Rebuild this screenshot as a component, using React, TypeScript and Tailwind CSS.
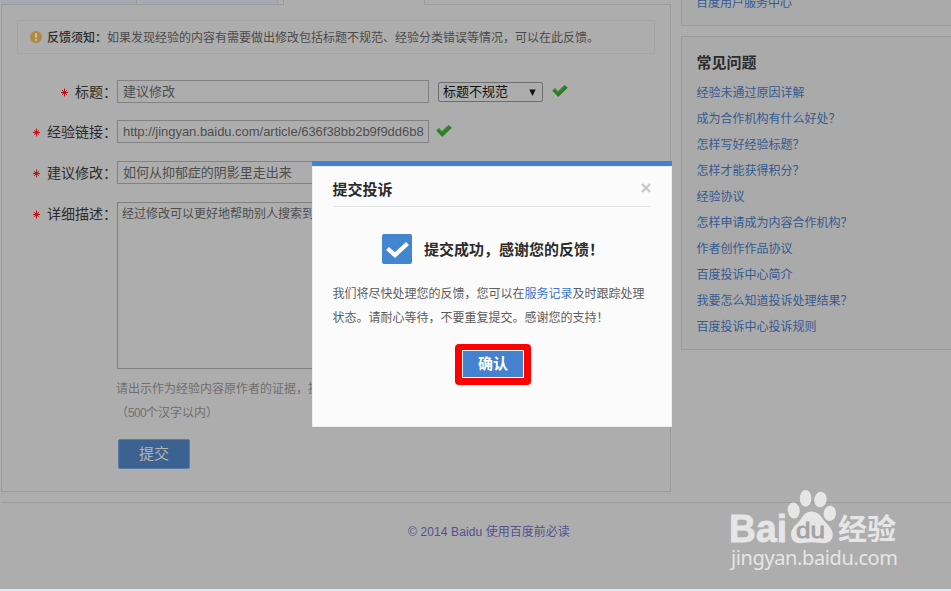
import type { ReactNode } from "react";
import clsx from "clsx";

const FAQ_LINKS = [
  "经验未通过原因详解",
  "成为合作机构有什么好处？",
  "怎样写好经验标题？",
  "怎样才能获得积分？",
  "经验协议",
  "怎样申请成为内容合作机构？",
  "作者创作作品协议",
  "百度投诉中心简介",
  "我要怎么知道投诉处理结果？",
  "百度投诉中心投诉规则",
];

function GreenTick() {
  return (
    <svg width="16" height="12" viewBox="0 0 16 12">
      <path d="M0.2 5.600 3 3 5.900 6 12.600 0 15.800 2.800 6.200 12Z" fill="#2b7d26" />
      <path d="M1.300 5.600 3 4.100 5.900 7.100 12.600 1.200" fill="none" stroke="#449a38" />
    </svg>
  );
}

function Field({
  label,
  className,
  children,
}: {
  label: string;
  className?: string;
  children: ReactNode;
}) {
  return (
    <div className={clsx("flex items-start", className)}>
      <div className="flex w-[115px] shrink-0 justify-end text-[14px] leading-[24px] text-[#2b2b2b]">
        <svg width="7" height="9" viewBox="0 0 7 9" className="mt-[8px] mr-[7px]">
          <path d="M3.500 0.500v8M0 4.500h7M1 2.200l5 4.600M6 2.200l-5 4.600" stroke="#b8141a" strokeWidth="1" />
        </svg>
        <span>{label}：</span>
      </div>
      {children}
    </div>
  );
}

function TextInput({ value }: { value: string }) {
  return (
    <div className="h-[23px] w-[312px] shrink-0 overflow-hidden border border-[#828282] pl-[5px] text-[13px] leading-[22px] tracking-[-0.03px] whitespace-nowrap text-[#4d4d4d]">
      {value}
    </div>
  );
}

function Tabs() {
  return (
    <div className="flex h-[5px] pl-px">
      <div className="flex w-[282px] gap-[5px] border-b border-[#9b9b9b] pl-px">
        <div className="w-[135px] border-r border-[#9b9b9b] bg-[#a3a8b3]" />
        <div className="w-[136px] border-r border-[#9b9b9b] bg-[#a3a8b3]" />
      </div>
      <div className="w-[142px] border-x border-[#9b9b9b]" />
      <div className="w-[246px] border-b border-[#9b9b9b]" />
    </div>
  );
}

function FeedbackForm() {
  return (
    <div className="ml-px h-[487px] w-[670px] border-x border-b border-[#9b9b9b] pt-[15px]">
      <div className="ml-[15px] flex h-[34px] w-[638px] items-center border border-[#a4a4a4] pl-[12px] text-[12px] text-[#4b4b4b]">
        <svg width="12" height="12" viewBox="0 0 12 12">
          <circle cx="6" cy="6" r="6" fill="#b08b45" />
          <path d="M6 2.2v4.6M6 8v1.8" stroke="#c9c0ae" strokeWidth="2" />
        </svg>
        <span className="ml-[5px] pt-[2px] font-medium text-[#2b2b2b]">反馈须知：</span>
        <span className="pt-[2px]">
          如果发现经验的内容有需要做出修改包括标题不规范、经验分类错误等情况，可以在此反馈。
        </span>
      </div>

      <Field label="标题" className="mt-[26px] h-[40px]">
        <TextInput value="建议修改" />
        <div className="mt-[2px] ml-[9px] flex h-[20px] w-[105px] items-center justify-between rounded-[2px] border border-[#6e6e6e] pr-[6px] pl-[4px] text-[13px] leading-[18px] text-[#111]">
          标题不规范
          <svg width="7" height="7" viewBox="0 0 7 7">
            <path d="M0.300 0.500h6.400L3.500 7Z" fill="#111" />
          </svg>
        </div>
        <div className="mt-[5px] ml-[9px]">
          <GreenTick />
        </div>
      </Field>

      <Field label="经验链接" className="h-[41px]">
        <TextInput value="http://jingyan.baidu.com/article/636f38bb2b9f9dd6b8" />
        <div className="mt-[5px] ml-[7px]">
          <GreenTick />
        </div>
      </Field>

      <Field label="建议修改" className="h-[41px]">
        <TextInput value="如何从抑郁症的阴影里走出来" />
      </Field>

      <Field label="详细描述" className="h-[174px]">
        <div className="h-[167px] w-[500px] shrink-0 overflow-hidden border border-[#828282] pt-px pl-[4px] text-[12px] leading-[20px] text-[#4d4d4d]">
          经过修改可以更好地帮助别人搜索到
        </div>
      </Field>

      <div className="pt-px pl-[114px] text-[12px] leading-[24px] text-[#6f6f6f]">
        <p>请出示作为经验内容原作者的证据，提</p>
        <p>
          （<span className="tracking-[-0.67px]">500</span>个汉字以内）
        </p>
        <div className="mt-[14px] ml-[2px] h-[30px] w-[72px] rounded-[2px] border border-[#5b7aa9] bg-[#3c6291] text-center text-[15px] leading-[28px] text-[#b5b5b5]">
          提交
        </div>
      </div>
    </div>
  );
}

function Sidebar() {
  return (
    <aside className="w-[270px] text-[12px] text-[#355a91]">
      <div className="h-[26px] overflow-hidden border-b border-l border-[#9b9b9b] bg-[#aaaaaa] pl-[14px]">
        <p className="mt-[-9px] leading-[24px]">百度用户服务中心</p>
      </div>
      <div className="mt-[10px] h-[314px] border-y border-l border-[#9b9b9b] bg-[#aaaaaa] pt-[14px] pl-[14.5px]">
        <h3 className="mb-[5px] text-[15px] leading-[24px] font-bold text-[#2b2b2b]">常见问题</h3>
        {FAQ_LINKS.map((text) => (
          <a key={text} className="block leading-[26px]">
            {text}
          </a>
        ))}
      </div>
    </aside>
  );
}

function Dialog() {
  return (
    <div className="absolute top-[161px] left-[312px] h-[266px] w-[360px] border-t-[5px] border-[#4481d0] bg-[#fbfbfb] px-[20.5px] shadow-[inset_0_0_0_1px_#eeeeee]">
      <div className="flex h-[41px] w-[318px] items-center justify-between border-b border-[#e5e5e5] pt-[7px]">
        <h2 className="text-[15px] leading-[24px] font-bold text-[#2b2b2b]">提交投诉</h2>
        <svg width="10" height="10" viewBox="0 0 10 10" className="mt-[-4px]">
          <path d="M1 1l8 8M9 1l-8 8" stroke="#c8c8c8" strokeWidth="2.3" />
        </svg>
      </div>
      <div className="mt-[27px] ml-[49.5px] flex items-center">
        <svg width="30" height="30" viewBox="0 0 30 30">
          <rect width="30" height="30" rx="2" fill="#4485cf" />
          <path d="M5.500 14.500 13 21 25.500 9.500" fill="none" stroke="#fff" strokeWidth="4.300" />
        </svg>
        <strong className="ml-[12px] h-[30px] pt-px text-[15px] leading-[30px] whitespace-nowrap text-[#2b2b2b]">
          提交成功，感谢您的反馈！
        </strong>
      </div>
      <p className="mt-[18px] w-[318px] text-[12px] leading-[24px] text-[#5c5c5c]">
        我们将尽快处理您的反馈，您可以在
        <a className="text-[#3b76cc]">服务记录</a>及时跟踪处理
        <br />
        状态。请耐心等待，不要重复提交。感谢您的支持！
      </p>
      <div className="mt-[14px] ml-[122.5px] h-[41px] w-[76px] rounded-[4px] bg-[#fe0000] px-[7px] pt-[6px] pb-[7px]">
        <button
          type="button"
          className="block h-[28px] w-[62px] border border-white bg-[#4481d0] text-center text-[15px] leading-[26px] font-bold text-white"
        >
          确认
        </button>
      </div>
    </div>
  );
}

function Watermark() {
  return (
    <svg
      width="180"
      height="90"
      viewBox="724 484 180 90"
      className="absolute top-[484px] left-[724px]"
      fill="#e6e6e6"
    >
      <text
        x="729"
        y="541.5"
        fontSize="38"
        fontWeight="bold"
        stroke="#e6e6e6"
        strokeWidth="0.8"
        textLength="58"
        lengthAdjust="spacingAndGlyphs"
      >
        Bai
      </text>
      <ellipse cx="793.7" cy="510.5" rx="6" ry="8" transform="rotate(-8 793.7 510.5)" />
      <ellipse cx="805.6" cy="498.4" rx="5.8" ry="8.3" />
      <ellipse cx="820.4" cy="499.6" rx="6.2" ry="7.8" transform="rotate(12 820.4 499.6)" />
      <ellipse cx="829.8" cy="513.4" rx="6.2" ry="7.6" transform="rotate(6 829.8 513.4)" />
      <path d="M811.500 511.500c5 0 8.500 3 11 7 3 4.800 10.300 9 10.300 16 0 5.500-4 8.700-9 8.700-4 0-7-1-12-1s-7.500 1-11.500 1c-5.500 0-9.300-3.200-9.300-9 0-6.500 7-10.500 10.200-15.700 2.600-4 5.300-7 10.300-7Z" />
      <text
        x="796"
        y="537.5"
        fontSize="22"
        fill="#a3a3a3"
        stroke="#a3a3a3"
        strokeWidth="0.8"
        textLength="29"
        lengthAdjust="spacingAndGlyphs"
      >
        du
      </text>
      <text x="838" y="540" fontSize="29" fontWeight="bold" textLength="58" lengthAdjust="spacingAndGlyphs">
        经验
      </text>
      <text x="731" y="565" fontSize="20" fontFamily="Noto Sans" textLength="167" lengthAdjust="spacing">
        jingyan.baidu.com
      </text>
    </svg>
  );
}

export default function App() {
  return (
    <div className="relative h-[591px] w-[951px] overflow-hidden border-b-2 border-[#dcebfa] bg-[#adadad] font-['Liberation_Sans','Noto_Sans_CJK_SC',sans-serif]">
      <div className="flex h-[502px] gap-[10px]">
        <main className="w-[671px] shrink-0">
          <Tabs />
          <FeedbackForm />
        </main>
        <Sidebar />
      </div>
      <footer className="ml-px border-t border-[#9b9b9b] pt-[17px] pl-[407px] text-[12px] leading-[24px] text-[#56508f]">
        <span className="tracking-[0.12px]">© 2014 Baidu </span>使用百度前必读
      </footer>
      <Watermark />
      <Dialog />
    </div>
  );
}
